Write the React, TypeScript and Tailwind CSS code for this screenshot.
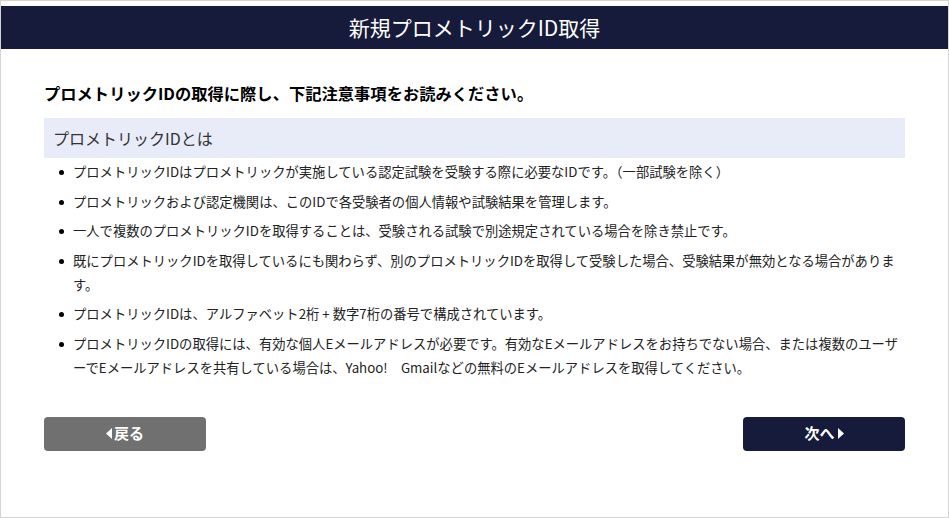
import React from 'react'

const font = { fontFamily: '"Noto Sans CJK JP", "Noto Sans", sans-serif' }

const notes = [
  'プロメトリックIDはプロメトリックが実施している認定試験を受験する際に必要なIDです。（一部試験を除く）',
  'プロメトリックおよび認定機関は、このIDで各受験者の個人情報や試験結果を管理します。',
  '一人で複数のプロメトリックIDを取得することは、受験される試験で別途規定されている場合を除き禁止です。',
  '既にプロメトリックIDを取得しているにも関わらず、別のプロメトリックIDを取得して受験した場合、受験結果が無効となる場合があります。',
  'プロメトリックIDは、アルファベット2桁 + 数字7桁の番号で構成されています。',
  'プロメトリックIDの取得には、有効な個人Eメールアドレスが必要です。有効なEメールアドレスをお持ちでない場合、または複数のユーザーでEメールアドレスを共有している場合は、Yahoo!　Gmailなどの無料のEメールアドレスを取得してください。',
]

function Caret({ dir }: { dir: 'left' | 'right' }) {
  return (
    <svg width="6" height="11" viewBox="0 0 6 11" className="shrink-0">
      {dir === 'left' ? <path d="M6 0 L0 5.5 L6 11 Z" fill="white" /> : <path d="M0 0 L6 5.5 L0 11 Z" fill="white" />}
    </svg>
  )
}

export default function App() {
  return (
    <div style={font} className="w-[949px] h-[518px] border border-[#d4d4d4] bg-white overflow-hidden">
      {/* Title bar */}
      <div className="mt-[5px] h-[43px] bg-[#171b3b] flex items-center justify-center">
        <h1 className="text-white text-[21px] leading-none">新規プロメトリックID取得</h1>
      </div>

      <div className="px-[43px]">
        <p className="mt-[32px] text-[16.3px] leading-[24px] font-bold text-black">
          プロメトリックIDの取得に際し、下記注意事項をお読みください。
        </p>

        <div className="mt-[13px] h-[40px] bg-[#e8ecf8] flex items-center px-[9px]">
          <h2 className="text-[16px] text-[#333]">プロメトリックIDとは</h2>
        </div>

        <ul className="mt-[2px] flex flex-col gap-[5.5px]">
          {notes.map((n) => (
            <li key={n} className="flex text-[13.3px] leading-[24px] text-[#222]">
              <span className="w-[29px] shrink-0 flex justify-end pr-[9px] pt-[10px]">
                <span className="block w-[5px] h-[5px] rounded-full bg-black" />
              </span>
              <span>{n}</span>
            </li>
          ))}
        </ul>

        {/* Buttons */}
        <div className="mt-[37px] flex justify-between">
          <button className="w-[162px] h-[34px] rounded-[4px] bg-[#707070] text-white text-[15px] font-bold flex items-center justify-center gap-[2px]">
            <Caret dir="left" />
            戻る
          </button>
          <button className="w-[162px] h-[34px] rounded-[4px] bg-[#171b3b] text-white text-[15px] font-bold flex items-center justify-center gap-[3px]">
            次へ
            <Caret dir="right" />
          </button>
        </div>
      </div>
    </div>
  )
}
